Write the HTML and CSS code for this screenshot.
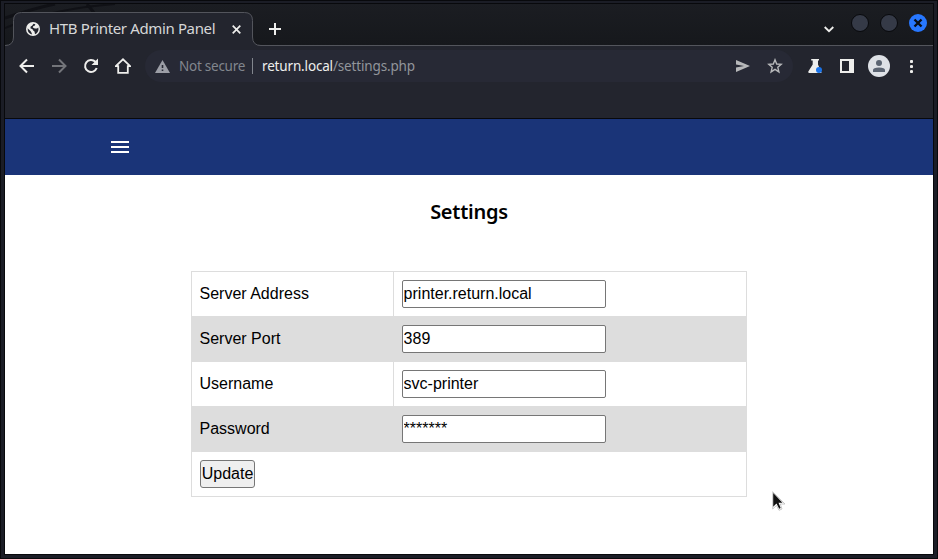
FILE: index.html
```html
<!DOCTYPE html>
<html lang="en">
<head>
<meta charset="utf-8">
<title>HTB Printer Admin Panel</title>
<link rel="stylesheet" href="styles.css">
</head>
<body>
<div class="window">
  <header class="tabstrip">
    <svg class="wallpaper" width="250" height="41" viewBox="0 0 250 41"><g fill="none" stroke="#101116"><path d="M0 24Q45 5 110 0" stroke-width="2"/><path d="M0 14Q30 4 50 0M90 10L82 0" stroke-width="3"/></g></svg>
    <div class="tab">
      <svg class="tab-edge" width="256" height="34" viewBox="0 0 256 34"><path d="M0 33.500Q8.500 33.500 8.500 25V8.500Q8.500 .5 16.500 .5H239.500Q247.500 .5 247.500 8.500V25Q247.500 33.500 256 33.500V34H0Z" fill="#23252e"/><path d="M0 33.500Q8.500 33.500 8.500 25V8.500Q8.500 .5 16.500 .5H239.500Q247.500 .5 247.500 8.500V25Q247.500 33.500 256 33.500" fill="none" stroke="#53555c"/></svg>
      <svg class="globe" width="14" height="14" viewBox="0 0 14 14"><circle cx="7" cy="7" r="7" fill="#eeeeec"/><path d="M7.500 1.800 9.300 2.200 8.900 3.400 7.200 4.300 6.800 5.500 8.800 6.500H11L12.300 5.400 12.500 7.500Q12.200 10.800 9 12.200L8.500 9.600 7.200 8.600 6.500 7.200 4.400 6.200 4.700 4.600 6.100 3.800Z" fill="#23252e"/><path d="M1.600 6.300 4.500 9 5.300 10.300 6.200 12.400Q1.600 11.500 1.600 6.300Z" fill="#23252e"/></svg>
      <span class="tab-title">HTB Printer Admin Panel</span>
      <svg class="close" width="9" height="9" viewBox="0 0 9 9"><path d="M.7.7l7.600 7.600M8.300.7L.7 8.300" stroke="#eeeeec" stroke-width="1.700"/></svg>
    </div>
    <svg class="plus" width="12" height="12" viewBox="0 0 12 12"><path d="M6 0v12M0 6h12" stroke="#eeeeec" stroke-width="2"/></svg>
    <svg class="chevron" width="10" height="7" viewBox="0 0 10 7"><path d="M.7 1 5 5.200 9.300 1" fill="none" stroke="#eeeeec" stroke-width="1.800"/></svg>
    <div class="controls">
      <i></i><i></i>
      <b><svg width="18" height="18" viewBox="0 0 18 18"><path d="M5.500 5.500l7 7M12.500 5.500l-7 7" stroke="#090d15" stroke-width="2.400"/></svg></b>
    </div>
  </header>
  <nav class="toolbar">
    <svg class="nav" width="16" height="16" viewBox="0 0 16 16"><path d="M15 8H2M8 1.500 1.500 8 8 14.500" fill="none" stroke="#eeeeec" stroke-width="2"/></svg>
    <svg class="nav" width="16" height="16" viewBox="0 0 16 16"><path d="M1 8h13M8 1.500 14.500 8 8 14.500" fill="none" stroke="#73757a" stroke-width="2"/></svg>
    <svg class="nav" width="16" height="16" viewBox="0 0 16 16"><path d="M13.700 10A6 6 0 1 1 12.400 3.800L14 5.500" fill="none" stroke="#eeeeec" stroke-width="2"/><path d="M15 .5V7H8.500Z" fill="#eeeeec"/></svg>
    <svg class="nav" width="16" height="16" viewBox="0 0 16 16"><path d="M.8 8.200 8 1.300 15.200 8.200H12.800V14.800H3.200V8.200Z" fill="none" stroke="#eeeeec" stroke-width="1.800"/></svg>
    <div class="address">
      <svg class="warning" width="15" height="13" viewBox="0 0 15 13"><path d="M7.500 0 15 13H0Z" fill="#9c9ea6"/><path d="M6.700 5h1.600v3H6.700zM6.700 9.500h1.600V11H6.700z" fill="#272935"/></svg>
      <span class="insecure">Not secure</span><span class="divider"></span>
      <span class="url">return.local<span>/settings.php</span></span>
      <svg class="send" width="14" height="12" viewBox="0 0 14 12"><path d="M0 0 14 6 0 12V7.500L8 6 0 4.500Z" fill="#b7b8ba"/></svg>
      <svg class="star" width="16" height="16" viewBox="0 0 16 16"><path d="M8 1.800 9.700 6 14.200 6.400 10.800 9.300 11.900 13.900 8 11.400 4.100 13.900 5.200 9.300 1.800 6.400 6.300 6Z" fill="none" stroke="#b7b8ba" stroke-width="1.400"/></svg>
    </div>
    <svg class="flask" width="15" height="15" viewBox="0 0 15 15"><path d="M3.200 0h7.800v1.600h-1v4L13.600 14H1Q0 13.800.3 12.500L4.700 5.600v-4H3.200Z" fill="#eeeeec"/><circle cx="11" cy="11" r="3" fill="#1a73e8"/></svg>
    <svg class="sidepanel" width="14" height="14" viewBox="0 0 14 14"><path d="M0 0h14v14H0zM2 2v10h7V2z" fill="#eeeeec" fill-rule="evenodd"/></svg>
    <svg class="avatar" width="22" height="22" viewBox="0 0 22 22"><circle cx="11" cy="11" r="11" fill="#dee1e6"/><circle cx="11" cy="8" r="3" fill="#5b6472"/><path d="M5 17v-2Q5 12.500 11 12.500T17 15v2Z" fill="#5b6472"/></svg>
    <svg class="dots" width="3" height="14" viewBox="0 0 3 14"><g fill="#eeeeec"><circle cx="1.500" cy="1.500" r="1.600"/><circle cx="1.500" cy="6.500" r="1.600"/><circle cx="1.500" cy="11.500" r="1.600"/></g></svg>
  </nav>
  <main class="page">
    <div class="bluebar"><span class="menu"><i></i><i></i><i></i></span></div>
    <h2>Settings</h2>
    <form>
      <table>
        <tr><td class="label">Server Address</td><td><input value="printer.return.local"></td></tr>
        <tr><td>Server Port</td><td><input value="389"></td></tr>
        <tr><td>Username</td><td><input value="svc-printer"></td></tr>
        <tr><td>Password</td><td><input value="*******"></td></tr>
        <tr><td colspan="2"><button type="button">Update</button></td></tr>
      </table>
    </form>
  </main>
</div>
<svg class="pointer" width="14" height="20" viewBox="0 0 14 20"><path d="M.7.7V18L4.500 14.500 7 19.300 10 18 8.300 13H13Z" fill="#fff" stroke="#bbb" stroke-width=".8"/><path d="M1.200 2V15.800L4.500 12.500 7.200 17.800 8.700 17 6.500 11.800H10.500Z" fill="#111"/></svg>
</body>
</html>
```

FILE: styles.css
```css
* { box-sizing: border-box; }
body { margin: 0; width: 938px; height: 559px; overflow: hidden; background: #1b1d26; border: 1px solid #08090c; font-family: "Liberation Sans", Arial, sans-serif; }
svg { display: block; flex: none; }
.window { margin: 2px 3px 3px; width: 930px; height: 552px; border: 1px solid #08090c; background: #fff; }
.tabstrip { height: 42px; display: flex; position: relative; background: linear-gradient(#1b1d22, #16181c); border-bottom: 1px solid #53555c; }
.wallpaper { position: absolute; left: 0; top: 0; }
.tab { position: relative; width: 256px; height: 34px; margin-top: 8px; display: flex; align-items: center; padding-left: 21px; }
.tab-edge { position: absolute; left: 0; top: 0; }
.globe { position: relative; }
.tab-title { position: relative; width: 168px; margin: -2px 0 0 9px; white-space: nowrap; font: 15px/20px "Noto Sans", sans-serif; letter-spacing: -.36px; color: #d6d7d8; }
.close { position: relative; margin-left: 15px; }
.plus { margin: 19px 0 0 8px; }
.chevron { margin: 22px 0 0 543px; }
.controls { display: flex; gap: 11px; margin: 10px 0 0 17px; }
.controls i, .controls b { width: 18px; height: 18px; border-radius: 50%; }
.controls i { background: #353a47; border: 1px solid #08090c; }
.controls b { background: #2777ff; }
.toolbar { height: 73px; display: flex; align-items: flex-start; padding: 12px 0 0 14px; background: #23252e; border-bottom: 1px solid #08090c; }
.nav { margin-right: 16px; }
.address { width: 648px; height: 32px; margin: -8px 0 0 -2px; display: flex; align-items: center; padding-left: 10px; border-radius: 16px; background: #272935; font: 13.5px/20px "Noto Sans", sans-serif; white-space: nowrap; }
.insecure { width: 66px; margin-left: 9px; letter-spacing: -.25px; color: #82868e; }
.divider { width: 1px; height: 16px; margin: 0 9px 0 7px; background: #82868e; }
.url { width: 153px; letter-spacing: -.16px; color: #eeeeec; }
.url span { color: #92959b; }
.send { margin-left: 321px; }
.star { margin-left: 17px; }
.flask { margin: 1px 0 0 15px; }
.sidepanel { margin: 1px 0 0 17px; }
.avatar { margin: -3px 0 0 14px; }
.dots { margin: 2px 0 0 20px; }
.bluebar { height: 56px; padding: 22px 0 0 106px; background: #1a3478; }
.menu { width: 18px; display: flex; flex-direction: column; gap: 3px; }
.menu i { height: 2px; background: #fff; }
h2 { margin: 23px 0 0; height: 28px; font: 600 20px/28px "Noto Sans", sans-serif; letter-spacing: -.25px; text-align: center; color: #000; }
form { margin: 45px 0 0 186px; }
table { width: 556px; border-collapse: collapse; table-layout: fixed; font-size: 16px; color: #000; }
tr { height: 45px; }
tr:nth-child(even) { background: #ddd; }
td { padding: 0 8px 0 7.500px; border: 1px solid #ddd; }
td + td { padding-left: 8px; }
.label { width: 202px; }
input { display: block; width: 204px; height: 28px; margin: 0; padding: 1px; border: 1px solid #767676; border-radius: 2px; background: #fff; color: #000; font: inherit; text-indent: -.4px; }
button { display: block; width: 55px; height: 28px; margin: 0 0 0 .5px; padding: 0; border: 1px solid #767676; border-radius: 3px; background: #efefef; color: #000; font: inherit; }
.pointer { position: absolute; left: 772px; top: 491px; }
```
